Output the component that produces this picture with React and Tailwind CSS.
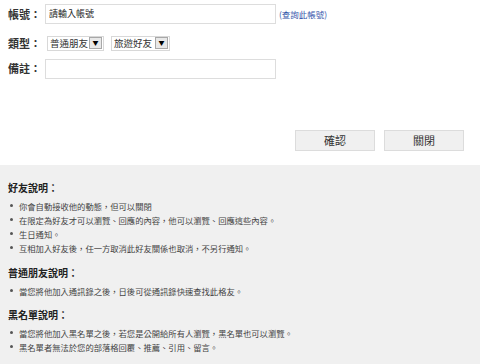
import React from 'react';

const font = { fontFamily: '"Noto Sans CJK TC", "Noto Sans", sans-serif' };

function Select({ label, width }) {
  return (
    <div className={`flex h-[15px] items-center border border-[#d8d8d8] bg-white pl-[2px] ${width}`}>
      <span className="flex-1 text-[9.5px] leading-none text-[#333]">{label}</span>
      <span className="mr-[1px] flex h-[12px] w-[13px] items-center justify-center border border-[#a8a8a8] bg-[#e8e8e8] text-[6px] leading-none text-black">
        ▼
      </span>
    </div>
  );
}

function Section({ title, items, className = '' }) {
  return (
    <div className={className}>
      <h3 className="text-[10px] font-bold leading-[14px] text-[#222]">{title}</h3>
      <ul className="mt-[4px]">
        {items.map((item) => (
          <li key={item} className="flex items-center text-[8.3px] leading-[14px] text-[#444]">
            <span className="ml-[2px] mr-[6px] h-[3px] w-[3px] rounded-full bg-[#555]" />
            {item}
          </li>
        ))}
      </ul>
    </div>
  );
}

export default function App() {
  return (
    <div className="h-[364px] w-[480px] overflow-hidden bg-white" style={font}>
      {/* Form */}
      <div className="pl-[8px] pt-[4px]">
        <div className="flex h-[20px] items-center">
          <span className="w-[37px] text-[11px] font-bold text-[#333]">帳號：</span>
          <div className="flex h-[20px] w-[231px] items-center border border-[#ddd] pl-[3px] text-[9px] text-[#222]">
            請輸入帳號
          </div>
          <a className="ml-[3px] text-[8.5px] text-[#3355aa]">(查詢此帳號)</a>
        </div>

        <div className="mt-[11px] flex items-center">
          <span className="w-[39px] text-[11px] font-bold text-[#333]">類型：</span>
          <Select label="普通朋友" width="w-[57px]" />
          <div className="w-[7px]" />
          <Select label="旅遊好友" width="w-[59px]" />
        </div>

        <div className="mt-[7px] flex h-[20px] items-center">
          <span className="w-[37px] text-[11px] font-bold text-[#333]">備註：</span>
          <div className="h-[20px] w-[231px] border border-[#ddd]" />
        </div>
      </div>

      {/* Buttons */}
      <div className="mt-[51px] flex justify-end gap-[9px] pr-[16px]">
        <button className="h-[21px] w-[80px] border border-[#dcdcdc] bg-[#f0f0f0] text-[11px] text-[#333]">確認</button>
        <button className="h-[21px] w-[80px] border border-[#dcdcdc] bg-[#f0f0f0] text-[11px] text-[#333]">關閉</button>
      </div>

      {/* Notes */}
      <div className="mt-[14px] h-[200px] bg-[#f0f0f0] px-[8px] pt-[16px]">
        <Section
          title="好友說明："
          items={[
            '你會自動接收他的動態，但可以關閉',
            '在限定為好友才可以瀏覽、回應的內容，他可以瀏覽、回應這些內容。',
            '生日通知。',
            '互相加入好友後，任一方取消此好友關係也取消，不另行通知。',
          ]}
        />
        <Section
          className="mt-[11px]"
          title="普通朋友說明："
          items={['當您將他加入通訊錄之後，日後可從通訊錄快速查找此格友。']}
        />
        <Section
          className="mt-[10px]"
          title="黑名單說明："
          items={[
            '當您將他加入黑名單之後，若您是公開給所有人瀏覽，黑名單也可以瀏覽。',
            '黑名單者無法於您的部落格回覆、推薦、引用、留言。',
          ]}
        />
      </div>
    </div>
  );
}
